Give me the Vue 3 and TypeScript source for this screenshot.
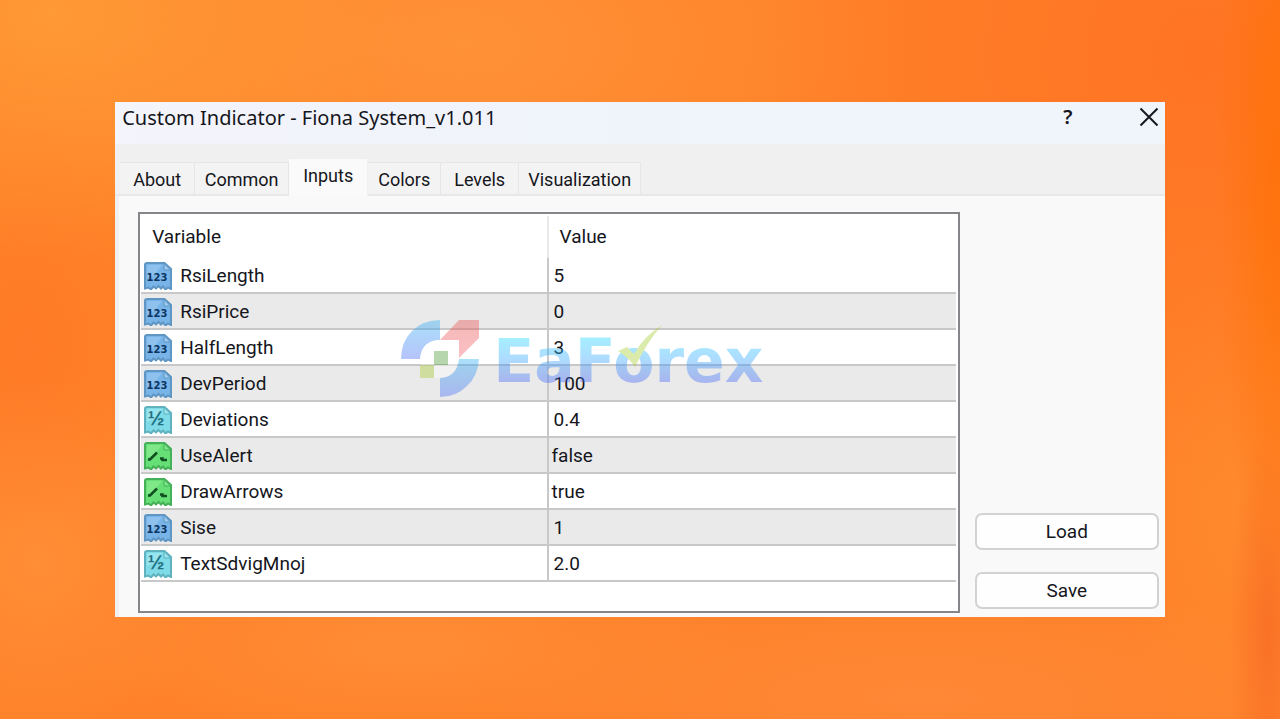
<script setup lang="ts">
import { ref } from 'vue'

type Kind = 'int' | 'double' | 'bool'
interface Row {
  name: string
  value: string
  kind: Kind
}

const tabs: string[] = ['About', 'Common', 'Inputs', 'Colors', 'Levels', 'Visualization']
const active = ref<string>('Inputs')

const rows: Row[] = [
  { name: 'RsiLength', value: '5', kind: 'int' },
  { name: 'RsiPrice', value: '0', kind: 'int' },
  { name: 'HalfLength', value: '3', kind: 'int' },
  { name: 'DevPeriod', value: '100', kind: 'int' },
  { name: 'Deviations', value: '0.4', kind: 'double' },
  { name: 'UseAlert', value: 'false', kind: 'bool' },
  { name: 'DrawArrows', value: 'true', kind: 'bool' },
  { name: 'Sise', value: '1', kind: 'int' },
  { name: 'TextSdvigMnoj', value: '2.0', kind: 'double' },
]
</script>

<template>
  <main class="backdrop">
    <section class="dialog" aria-labelledby="dialog-title">
      <header class="titlebar">
        <h1 id="dialog-title">Custom Indicator - Fiona System_v1.011</h1>
        <button class="caption-btn help" type="button" aria-label="Help">?</button>
        <button class="caption-btn" type="button" aria-label="Close">
          <svg width="20" height="20" viewBox="0 0 20 20" aria-hidden="true">
            <path d="M1.5 1.5 18.500 18.500M18.500 1.5 1.500 18.500" fill="none" stroke="#17181c" stroke-width="2" />
          </svg>
        </button>
      </header>

      <nav class="tabs" role="tablist">
        <button
          v-for="tab in tabs"
          :key="tab"
          type="button"
          role="tab"
          class="tab"
          :class="{ active: tab === active }"
          :aria-selected="tab === active"
          @click="active = tab"
        >
          {{ tab }}
        </button>
      </nav>

      <div class="pane">
        <div class="list">
          <table>
            <colgroup>
              <col class="col-name" />
              <col />
            </colgroup>
            <thead>
              <tr>
                <th scope="col">Variable</th>
                <th scope="col">Value</th>
              </tr>
            </thead>
            <tbody>
              <tr v-for="row in rows" :key="row.name">
                <td>
                  <div class="name">
                    <svg class="icon" :class="row.kind" viewBox="0 0 28 28" aria-hidden="true">
                      <path
                        class="sheet"
                        d="M3 1H20.500L27 7V27L24 25.500 21.500 27.500 19 24.500 17 26.500 14.500 24 12 26.500 9.500 24.500 7 27.500 4.500 25.500 1 26.500V3Q1 1 3 1Z"
                      />
                      <path class="shine" d="M4 3H18L10 13 3 16V4Z" />
                      <path class="fold" d="M20 1.500V8H26.500Z" />
                      <text v-if="row.kind === 'int'" x="13" y="19" class="digits">123</text>
                      <text v-else-if="row.kind === 'double'" x="12" y="19" class="half">½</text>
                      <path v-else class="switch" d="M4 17.500H6L13 10.500M16 16.500H18.500V18H23" />
                    </svg>
                    <span>{{ row.name }}</span>
                  </div>
                </td>
                <td :class="{ word: row.kind === 'bool' }">{{ row.value }}</td>
              </tr>
            </tbody>
          </table>

          <div class="watermark">
            <svg width="78" height="78" viewBox="0 0 78 78" aria-hidden="true">
              <defs>
                <linearGradient id="wm-blue" x1="0" y1="0" x2="0" y2="1">
                  <stop offset="0" stop-color="#2fb2f5" />
                  <stop offset="1" stop-color="#4a6cf7" />
                </linearGradient>
                <linearGradient id="wm-red" x1="0" y1="0" x2="0" y2="1">
                  <stop offset="0" stop-color="#e8504e" />
                  <stop offset="1" stop-color="#f8606c" />
                </linearGradient>
              </defs>
              <path d="M39 0V20Q20 21 19 39H0Q0 22 11 11 22 0 39 0Z" fill="url(#wm-blue)" />
              <path d="M58 0H78V18L58 38V20H39Z" fill="url(#wm-red)" />
              <path class="core" d="M20 39Q21 20 39 20H58V39Q56 57 39 58H33V45H20Z" />
              <path d="M33 31H47V45H33Z" fill="#4b9b37" />
              <path d="M19 45H33V58H19Z" fill="#a8cc30" />
              <path d="M58 39H78Q77 56 66 66 55 77 39 77V58Q56 57 58 39Z" fill="url(#wm-blue)" />
            </svg>
            <span class="brand">EaForex</span>
            <svg class="tick" width="46" height="44" viewBox="0 0 46 44" aria-hidden="true">
              <path d="M1 27 10 23 17 30Q27 12 45 1 30 18 18 43 12 34 1 27Z" fill="#a5cf32" />
            </svg>
          </div>
        </div>

        <aside class="actions">
          <button type="button">Load</button>
          <button type="button">Save</button>
        </aside>
      </div>
    </section>
  </main>
</template>

<style>
body {
  margin: 0;
}
</style>

<style scoped>
* {
  box-sizing: border-box;
}

button {
  margin: 0;
  border: 0;
  color: inherit;
  font: inherit;
  background: none;
}

.backdrop {
  display: flex;
  flex-direction: column;
  justify-content: center;
  min-height: 100vh;
  padding: 0 9%;
  color: #15161c;
  font-family: Roboto, "Liberation Sans", sans-serif;
  font-size: 19px;
  line-height: 24px;
  background:
    radial-gradient(ellipse 5% 60% at 100% 25%, rgba(255, 112, 0, 0.7), transparent),
    radial-gradient(ellipse 36% 60% at 94% 8%, rgba(255, 100, 28, 0.45), transparent),
    radial-gradient(ellipse 3% 30% at 99% 88%, rgba(240, 84, 30, 0.4), transparent),
    radial-gradient(ellipse 10% 40% at 97% 68%, rgba(255, 146, 50, 0.5), transparent),
    radial-gradient(ellipse 28% 34% at 4% 2%, rgba(255, 156, 54, 0.9), transparent),
    radial-gradient(ellipse 36% 34% at 36% 6%, rgba(255, 152, 60, 0.7), transparent),
    radial-gradient(ellipse 10% 26% at 2% 48%, rgba(255, 116, 36, 0.5), transparent),
    radial-gradient(ellipse 14% 26% at 3% 78%, rgba(255, 150, 62, 0.6), transparent),
    radial-gradient(ellipse 26% 14% at 32% 90%, rgba(255, 148, 62, 0.6), transparent),
    radial-gradient(ellipse 34% 16% at 72% 97%, rgba(255, 144, 68, 0.5), transparent),
    #ff8129;
}

.dialog {
  background: #f0f0f0;
}

.titlebar {
  display: flex;
  align-items: flex-start;
  height: 42px;
  padding: 3px 6px 0 7px;
  background: linear-gradient(90deg, #f4f4fb, #eff3fa 50%, #f0f4fb);
}

h1 {
  flex: 1;
  margin: 0;
  font-family: "Noto Sans", "Open Sans", sans-serif;
  font-size: 20px;
  font-weight: 400;
  line-height: 26px;
}

.caption-btn {
  display: grid;
  place-items: center;
  width: 20px;
  height: 24px;
  padding: 0;
}

.help {
  margin-right: 61px;
  font-family: "Noto Sans", sans-serif;
  font-size: 20px;
  font-weight: 600;
}

.tabs {
  display: grid;
  grid-template-columns: 75px 94px 79px 73px 78px 122px;
  align-items: end;
  height: 52px;
  padding-left: 5px;
  border-bottom: 2px solid #e8e8e8;
}

.tab {
  height: 32px;
  padding: 2px 0 0;
  border: solid #e6e6e6;
  border-width: 1px 1px 0 0;
  font-size: 18px;
  background: #f3f3f3;
}

.tab.active {
  height: 38px;
  margin-bottom: -2px;
  padding: 0 0 4px;
  border-color: #f0f0f0;
  background: #fafafa;
}

.pane {
  display: flex;
  gap: 15px;
  margin-left: 4px;
  padding: 16px 6px 4px 19px;
  background: #f9f9f9;
}

.list {
  position: relative;
  flex: 1;
  padding: 2px 2px 29px 1px;
  border: 2px solid #85868a;
  background: #fff;
}

table {
  width: 100%;
  border-collapse: separate;
  border-spacing: 0;
  table-layout: fixed;
}

.col-name {
  width: 50%;
}

th {
  height: 42px;
  padding: 0 11px;
  font-weight: 400;
  text-align: left;
}

th:first-child {
  border-right: 2px solid #e8e8e8;
}

td {
  height: 36px;
  padding: 2px 5px 0;
  border-bottom: 2px solid #c8c8c8;
}

td.word {
  padding-left: 3px;
}

td:first-child {
  padding: 2px 3px 0;
  border-right: 2px solid #c8c8c8;
}

tbody tr:nth-child(even) {
  background: #eaeaea;
}

.name {
  display: flex;
  align-items: center;
  gap: 8px;
}

.icon {
  flex: none;
  width: 28px;
  height: 28px;
}

.sheet {
  fill: #79b4e8;
  stroke: #5f96c4;
  stroke-width: 2;
}

.shine {
  fill: #8fc1ee;
}

.fold {
  fill: #9ecbf1;
  stroke: #5f96c4;
  stroke-width: 1;
}

.digits {
  fill: #0d3560;
  font: 700 10px "DejaVu Sans", sans-serif;
  text-anchor: middle;
}

.half {
  fill: #216f80;
  font: 700 20px "Liberation Sans", sans-serif;
  text-anchor: middle;
}

.double .sheet {
  fill: #7fdbe8;
  stroke: #5fb2be;
}

.double .shine {
  fill: #98e5ee;
}

.double .fold {
  fill: #a0e5ee;
  stroke: #5fb2be;
}

.bool .sheet {
  fill: #66df76;
  stroke: #45b058;
}

.bool .shine {
  fill: #80e889;
}

.bool .fold {
  fill: #7fe889;
  stroke: #45b058;
}

.switch {
  fill: none;
  stroke: #114e20;
  stroke-width: 2.5;
}

.watermark {
  position: absolute;
  top: 106px;
  left: 261px;
  display: flex;
  align-items: center;
  gap: 14px;
  opacity: 0.4;
  pointer-events: none;
}

.core {
  fill: #fff;
}

.brand {
  padding-top: 4px;
  color: transparent;
  font: 700 60px/74px "DejaVu Sans", sans-serif;
  background: linear-gradient(#22d3ff 25%, #35a8ff 50%, #4a5cf7 85%);
  background-clip: text;
}

.tick {
  position: absolute;
  top: 4px;
  left: 216px;
}

.actions {
  display: flex;
  flex-direction: column;
  justify-content: flex-end;
  gap: 22px;
  width: 184px;
  padding-bottom: 4px;
}

.actions button {
  height: 37px;
  border: 2px solid #d2d2d2;
  border-radius: 7px;
  background: #fefefe;
}
</style>
